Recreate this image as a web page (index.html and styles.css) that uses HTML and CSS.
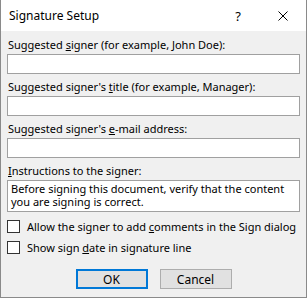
FILE: index.html
```html
<!DOCTYPE html>
<html>
<head>
    <title>Signature Setup</title>
    <link rel="stylesheet" href="styles.css">
</head>
<body>
    <div class="dialog">
        <div class="titlebar">
            <span class="title">Signature Setup</span>
            <span class="help">?</span>
            <svg class="close" width="10" height="10" viewBox="0 0 10 10">
                <path d="M0.5 0.5L9.5 9.5M9.5 0.5L0.5 9.5" stroke="#000" stroke-width="1" fill="none"/>
            </svg>
        </div>

        <div class="content">
            <div class="field">
                <label>Suggested <u>s</u>igner (for example, John Doe):</label>
                <div class="input"></div>
            </div>
            <div class="field">
                <label>Suggested signer's <u>t</u>itle (for example, Manager):</label>
                <div class="input"></div>
            </div>
            <div class="field">
                <label>Suggested signer's <u>e</u>-mail address:</label>
                <div class="input"></div>
            </div>
            <div class="field">
                <label><u>I</u>nstructions to the signer:</label>
                <div class="textarea">Before signing this document, verify that the content you are signing is correct.</div>
            </div>

            <div class="checks">
                <div class="check-row">
                    <span class="box"></span>
                    <span>Allow the signer to add <u>c</u>omments in the Sign dialog</span>
                </div>
                <div class="check-row">
                    <span class="box"></span>
                    <span>Show sign <u>d</u>ate in signature line</span>
                </div>
            </div>

            <div class="buttons">
                <button class="btn btn-default">OK</button>
                <button class="btn">Cancel</button>
            </div>
        </div>
    </div>
</body>
</html>
```

FILE: styles.css
```css
body {
    margin: 0;
    font-family: "Noto Sans", "Liberation Sans", sans-serif;
    font-size: 11px;
    color: #000;
}
.dialog {
    width: 307px;
    height: 298px;
    box-sizing: border-box;
    border: 1px solid #8a8a8a;
    border-top: none;
    background: #f0f0f0;
    display: flex;
    flex-direction: column;
}
.titlebar {
    height: 31px;
    background: #fff;
    display: flex;
    align-items: center;
    padding-left: 8px;
}
.title {
    font-size: 12px;
    flex: 1;
}
.help {
    font-size: 13px;
    margin-right: 37px;
}
.close {
    margin-right: 18px;
}
.content {
    padding: 1px 6px 0;
}
.field label {
    display: block;
    line-height: 16px;
    margin: 5px 0 1px 1px;
    white-space: nowrap;
}
.input {
    height: 20px;
    box-sizing: border-box;
    background: #fff;
    border: 1px solid #a0a0a0;
}
.textarea {
    height: 32px;
    box-sizing: border-box;
    background: #fff;
    border: 1px solid #a0a0a0;
    padding: 1px 3px;
    line-height: 13px;
}
.checks {
    margin-top: 4px;
}
.check-row {
    height: 21px;
    display: flex;
    align-items: center;
    gap: 7px;
    white-space: nowrap;
}
.box {
    flex-shrink: 0;
    width: 13px;
    height: 13px;
    box-sizing: border-box;
    border: 1px solid #333;
    background: #fff;
}
.buttons {
    margin-top: 11px;
    display: flex;
    justify-content: center;
    gap: 12px;
}
.btn {
    width: 72px;
    height: 20px;
    box-sizing: border-box;
    font-family: inherit;
    font-size: 12px;
    background: #e1e1e1;
    border: 1px solid #adadad;
    padding: 0;
}
.btn-default {
    border: 2px solid #0078d7;
}
```
